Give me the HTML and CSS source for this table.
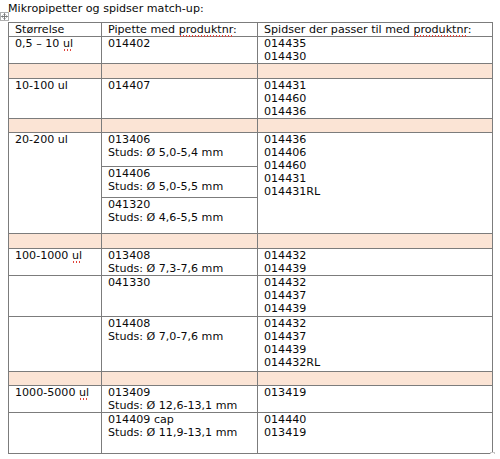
FILE: index.html
```html
<!DOCTYPE html>
<html lang="da">
<head>
  <meta charset="utf-8">
  <title>Mikropipetter og spidser match-up</title>
  <link rel="stylesheet" href="styles.css">
</head>
<body>
  <div class="page">
    <span class="move-handle">
      <svg width="9" height="9" viewBox="0 0 9 9" fill="none" stroke="#7a7a7a" stroke-width="1">
        <rect x="0.5" y="0.5" width="8" height="8" fill="#fff" stroke="#b0b0b0"></rect>
        <line x1="4.5" y1="1.5" x2="4.5" y2="7.5"></line>
        <line x1="1.5" y1="4.5" x2="7.5" y2="4.5"></line>
        <path d="M3.5 2.5 L4.5 1.5 L5.5 2.5 M3.5 6.5 L4.5 7.5 L5.5 6.5 M2.5 3.5 L1.5 4.5 L2.5 5.5 M6.5 3.5 L7.5 4.5 L6.5 5.5"></path>
      </svg>
    </span>

    <p class="title">Mikropipetter og spidser match-up:</p>

    <table class="match">
      <colgroup>
        <col class="col-size">
        <col class="col-pipette">
        <col class="col-tips">
      </colgroup>
      <tr class="row-head">
        <td>Størrelse</td>
        <td>Pipette med <span class="spell">produktnr</span>:</td>
        <td>Spidser der passer til med <span class="spell">produktnr</span>:</td>
      </tr>

      <tr class="row-2l">
        <td>0,5 – 10 <span class="spell">ul</span></td>
        <td>014402</td>
        <td>014435<br>014430</td>
      </tr>
      <tr class="spacer"><td></td><td></td><td></td></tr>

      <tr class="row-3l">
        <td>10-100 ul</td>
        <td>014407</td>
        <td>014431<br>014460<br>014436</td>
      </tr>
      <tr class="spacer spacer-short"><td></td><td></td><td></td></tr>

      <tr class="row-a">
        <td rowspan="3">20-200 ul</td>
        <td>013406<br>Studs: Ø 5,0-5,4 mm</td>
        <td rowspan="3">014436<br>014406<br>014460<br>014431<br>014431RL</td>
      </tr>
      <tr class="row-b">
        <td>014406<br>Studs: Ø 5,0-5,5 mm</td>
      </tr>
      <tr class="row-c">
        <td>041320<br>Studs: Ø 4,6-5,5 mm</td>
      </tr>
      <tr class="spacer"><td></td><td></td><td></td></tr>

      <tr class="row-2l">
        <td>100-1000 <span class="spell">ul</span></td>
        <td>013408<br>Studs: Ø 7,3-7,6 mm</td>
        <td>014432<br>014439</td>
      </tr>
      <tr class="row-3l-b">
        <td></td>
        <td>041330</td>
        <td>014432<br>014437<br>014439</td>
      </tr>
      <tr class="row-4l">
        <td></td>
        <td>014408<br>Studs: Ø 7,0-7,6 mm</td>
        <td>014432<br>014437<br>014439<br>014432RL</td>
      </tr>
      <tr class="spacer spacer-short"><td></td><td></td><td></td></tr>

      <tr class="row-2l">
        <td>1000-5000 <span class="spell">ul</span></td>
        <td>013409<br>Studs: Ø 12,6-13,1 mm</td>
        <td>013419</td>
      </tr>
      <tr class="row-3l-b">
        <td></td>
        <td>014409 cap<br>Studs: Ø 11,9-13,1 mm</td>
        <td>014440<br>013419</td>
      </tr>
    </table>
    <span class="resize-handle"></span>
  </div>
</body>
</html>
```

FILE: styles.css
```css
* {
  box-sizing: border-box;
}

body {
  margin: 0;
  background: #ffffff;
  color: #0a0a0a;
  font-family: "DejaVu Sans", Verdana, sans-serif;
  font-size: 11.1px;
  line-height: 13.5px;
}

.page {
  position: relative;
  padding: 2px 8px 0;
}

.move-handle {
  position: absolute;
  left: 0;
  top: 12px;
  width: 9px;
  height: 9px;
  display: block;
}

.move-handle svg {
  display: block;
}

.title {
  margin: 0 0 6px;
  height: 14px;
}

.match {
  width: 484px;
  border-collapse: collapse;
  table-layout: fixed;
  line-height: 13px;
}

.col-size {
  width: 93px;
}

.col-pipette {
  width: 156px;
}

.col-tips {
  width: 235px;
}

.match td {
  border: 1px solid #7c7c7c;
  padding: 0 5px 0 6px;
  vertical-align: top;
  white-space: nowrap;
}

.spell {
  padding-bottom: 1px;
  background-image: radial-gradient(circle, #e0453c 0.7px, transparent 1.1px);
  background-size: 3px 2px;
  background-repeat: repeat-x;
  background-position: 0 100%;
}

.row-head { height: 14px; }
.row-2l { height: 27px; }
.row-3l { height: 40px; }
.row-a { height: 34px; }
.row-b { height: 31px; }
.row-c { height: 36px; }
.row-3l-b { height: 41px; }
.row-4l { height: 55px; }

.spacer {
  height: 15px;
}

.spacer-short {
  height: 14px;
}

.spacer td {
  background: #fbe4d5;
  padding: 0;
}

.resize-handle {
  position: absolute;
  left: 490px;
  top: 452px;
  width: 5px;
  height: 5px;
  border: 1px solid #c8c8c8;
  background: #fff;
}
```
